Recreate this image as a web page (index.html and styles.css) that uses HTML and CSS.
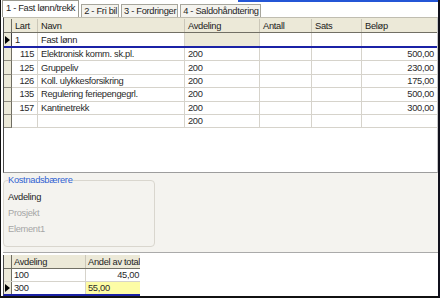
FILE: index.html
```html
<!DOCTYPE html>
<html>
<head>
<meta charset="utf-8">
<title>Lønn</title>
<link rel="stylesheet" href="styles.css">
</head>
<body>
<div class="window">
  <div class="tabs">
    <div class="tab active">1 - Fast lønn/trekk</div>
    <div class="tab">2 - Fri bil</div>
    <div class="tab">3 - Fordringer</div>
    <div class="tab">4 - Saldohåndtering</div>
  </div>

  <div class="maingrid">
    <div class="row head">
      <div class="ind"></div>
      <div class="c">Lart</div>
      <div class="c">Navn</div>
      <div class="c">Avdeling</div>
      <div class="c">Antall</div>
      <div class="c">Sats</div>
      <div class="c last">Beløp</div>
    </div>
    <div class="row fixed">
      <div class="ind"><span class="arrow"></span></div>
      <div class="c">1</div>
      <div class="c">Fast lønn</div>
      <div class="c dis"></div>
      <div class="c"></div>
      <div class="c"></div>
      <div class="c last"></div>
    </div>
    <div class="row data">
      <div class="ind"></div>
      <div class="c num">115</div>
      <div class="c">Elektronisk komm. sk.pl.</div>
      <div class="c">200</div>
      <div class="c"></div>
      <div class="c"></div>
      <div class="c num last">500,00</div>
    </div>
    <div class="row data">
      <div class="ind"></div>
      <div class="c num">125</div>
      <div class="c">Gruppeliv</div>
      <div class="c">200</div>
      <div class="c"></div>
      <div class="c"></div>
      <div class="c num last">230,00</div>
    </div>
    <div class="row data">
      <div class="ind"></div>
      <div class="c num">126</div>
      <div class="c">Koll. ulykkesforsikring</div>
      <div class="c">200</div>
      <div class="c"></div>
      <div class="c"></div>
      <div class="c num last">175,00</div>
    </div>
    <div class="row data">
      <div class="ind"></div>
      <div class="c num">135</div>
      <div class="c">Regulering feriepengegrl.</div>
      <div class="c">200</div>
      <div class="c"></div>
      <div class="c"></div>
      <div class="c num last">500,00</div>
    </div>
    <div class="row data">
      <div class="ind"></div>
      <div class="c num">157</div>
      <div class="c">Kantinetrekk</div>
      <div class="c">200</div>
      <div class="c"></div>
      <div class="c"></div>
      <div class="c num last">300,00</div>
    </div>
    <div class="row data">
      <div class="ind"></div>
      <div class="c num"></div>
      <div class="c"></div>
      <div class="c">200</div>
      <div class="c"></div>
      <div class="c"></div>
      <div class="c num last"></div>
    </div>
  </div>

  <div class="lower">
    <fieldset class="group">
      <legend>Kostnadsbærere</legend>
      <div class="gi on">Avdeling</div>
      <div class="gi">Prosjekt</div>
      <div class="gi">Element1</div>
    </fieldset>
  </div>

  <div class="smallgrid">
    <div class="srow head">
      <div class="ind"></div>
      <div class="c">Avdeling</div>
      <div class="c last">Andel av total</div>
    </div>
    <div class="srow data">
      <div class="ind"></div>
      <div class="c">100</div>
      <div class="c num last">45,00</div>
    </div>
    <div class="srow data cur">
      <div class="ind"><span class="arrow"></span></div>
      <div class="c">300</div>
      <div class="c edit">55,00</div>
    </div>
  </div>
</div>
</body>
</html>
```

FILE: styles.css
```css
* { box-sizing: border-box; }

body {
  margin: 0;
  background: #ffffff;
  font-family: "Liberation Sans", Arial, sans-serif;
  font-size: 9.3px;
  letter-spacing: -0.3px;
  color: #1e1e1e;
}

.window {
  width: 440px;
  height: 298px;
  border-left: 1px solid #111111;
  border-right: 2px solid #10101c;
  border-bottom: 2px solid #111111;
  padding-left: 2px;
  display: flex;
  flex-direction: column;
}

/* tabs */
.tabs {
  height: 17px;
  flex: none;
  display: flex;
  align-items: flex-end;
  margin-left: -1px;
  background: linear-gradient(#2456d6, #2456d6) no-repeat 236px 0 / 100% 2px;
}

.tab {
  height: 13px;
  padding: 0 1px 0 2px;
  margin-left: 2px;
  border: 1px solid #a7a69c;
  border-bottom: none;
  background: #f4f3ee;
  display: flex;
  align-items: center;
  white-space: nowrap;
  color: #1e1e1e;
}

.tab.active {
  height: 17px;
  margin-left: 0;
  padding: 0 3px 3px;
  background: #ffffff;
  border-color: #9c9b91;
}

/* main grid */
.maingrid {
  height: 156px;
  flex: none;
  border-left: 1px solid #4a4a4a;
  border-right: 1px solid #c8c8c8;
  border-top: 1px solid #c0bdb0;
  border-bottom: 1px solid #9d9d9d;
  background: #ffffff;
}

.row {
  display: grid;
  grid-template-columns: 8px 26px 147px 75px 52px 50px 1fr;
}

.c {
  padding: 0 3px;
  display: flex;
  align-items: center;
  white-space: nowrap;
  overflow: hidden;
  border-right: 1px solid #d6d3cb;
}

.c.last { border-right: none; }
.c.num { justify-content: flex-end; }

.ind {
  background: #ece9d8;
  border-right: 1px solid #6f6d62;
  display: flex;
  align-items: center;
  justify-content: center;
}

.row.head {
  height: 15px;
  background: #ece9d8;
  border-bottom: 1px solid #716f64;
  padding-top: 1px;
}

.row.head .c {
  border-right: 1px solid #cbc7b8;
  color: #1a1a1a;
}

.row.head .c.last { border-right: none; }

.row.fixed {
  height: 15px;
  border-bottom: 2px solid #1b22a6;
}

.row.fixed .ind {
  border-right: 1px solid #444;
}

.c.dis { background: #ece9d8; }

.row.data {
  height: 13.4px;
  border-bottom: 1px solid #d6d3cb;
  color: #2a2a2a;
}

.row.data .ind {
  border-bottom: 1px solid #8d8a7e;
  margin-bottom: -1px;
}

.arrow {
  width: 0;
  height: 0;
  border-left: 5px solid #000;
  border-top: 4px solid transparent;
  border-bottom: 4px solid transparent;
}

/* lower panel */
.lower {
  height: 80px;
  flex: none;
  background: #f4f3ef;
  border-bottom: 1px solid #aaaaaa;
}

.group {
  width: 152px;
  height: 73px;
  margin: 1px 0 0 0;
  padding: 3px 4px 0;
  border: 1px solid #d9d6ce;
  border-radius: 4px;
  min-width: 0;
}

.group legend {
  padding: 0;
  line-height: 12px;
  color: #2f62d2;
}

.gi {
  height: 16px;
  line-height: 16px;
  color: #a6a6a6;
}

.gi.on { color: #1e1e1e; }

/* small grid */
.smallgrid {
  width: 137px;
  margin-top: 2px;
  border-left: 1px solid #4a4a4a;
  border-bottom: 2px solid #1b22a6;
}

.srow {
  display: grid;
  grid-template-columns: 8px 74px 1fr;
}

.srow .c { padding: 0 1px 0 2px; }

.srow.head {
  height: 14px;
  background: #ece9d8;
  border-bottom: 1px solid #716f64;
}

.srow.head .c { border-right: 1px solid #cbc7b8; }
.srow.head .c.last { border-right: none; }

.srow.data {
  height: 13px;
  border-bottom: 1px solid #d6d3cb;
  color: #2a2a2a;
}

.srow.data.cur {
  height: 12px;
  border-bottom: none;
}

.c.edit {
  background: #fdfca6;
  border-right: none;
}
```
